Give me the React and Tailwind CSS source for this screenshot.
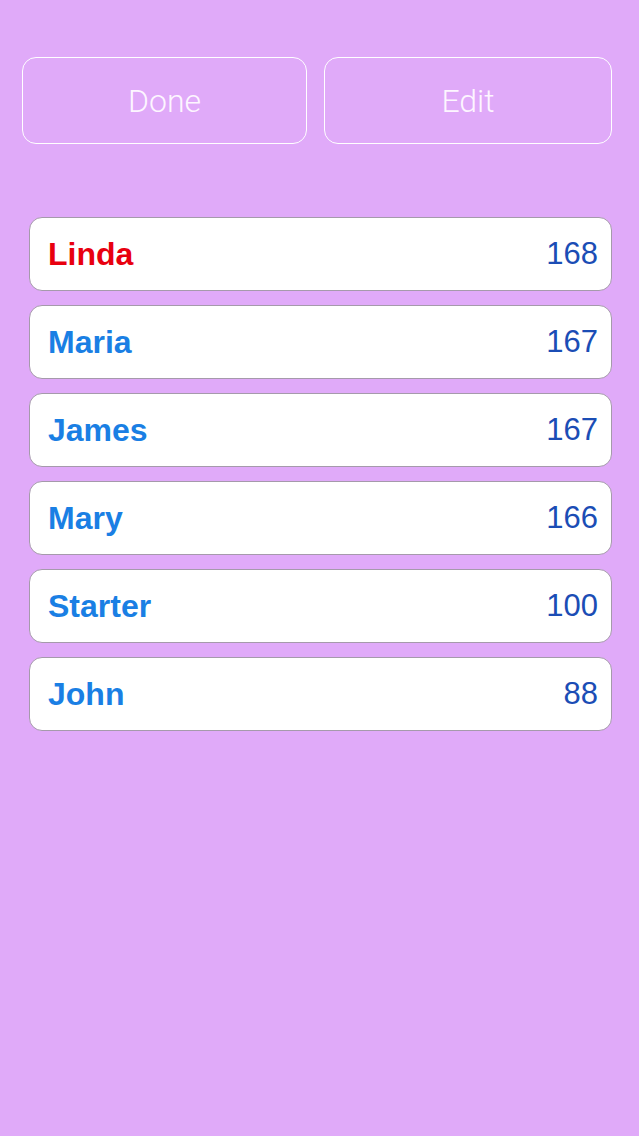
export default function App() {
  const rows = [
    { name: "Linda", score: 168, red: true },
    { name: "Maria", score: 167 },
    { name: "James", score: 167 },
    { name: "Mary", score: 166 },
    { name: "Starter", score: 100 },
    { name: "John", score: 88 },
  ];
  return (
    <div className="w-[639px] h-[1136px] bg-[#e0aaf9] flex flex-col font-['Liberation_Sans',Arial,sans-serif]">
      <div className="flex pt-[57px] pl-[22px] gap-[17px]">
        <button className="w-[285px] h-[87px] rounded-[14px] border-[1.5px] border-white text-[#fdf6ff] text-[32px] font-light flex items-center justify-center font-['Roboto',Arial,sans-serif]">
          Done
        </button>
        <button className="w-[288px] h-[87px] rounded-[14px] border-[1.5px] border-white text-[#fdf6ff] text-[32px] font-light flex items-center justify-center font-['Roboto',Arial,sans-serif]">
          Edit
        </button>
      </div>
      <div className="flex flex-col gap-[14px] pl-[29px] mt-[73px]">
        {rows.map((r) => (
          <div
            key={r.name}
            className="w-[583px] h-[74px] bg-white rounded-[13px] border-[1.5px] border-[#a59aab] flex items-center justify-between pl-[18px] pr-[13px]"
          >
            <span
              className={
                "text-[32px] font-bold " +
                (r.red ? "text-[#e8000f]" : "text-[#1a7fe4]")
              }
            >
              {r.name}
            </span>
            <span className="text-[31px] text-[#1b4db5]">{r.score}</span>
          </div>
        ))}
      </div>
    </div>
  );
}
